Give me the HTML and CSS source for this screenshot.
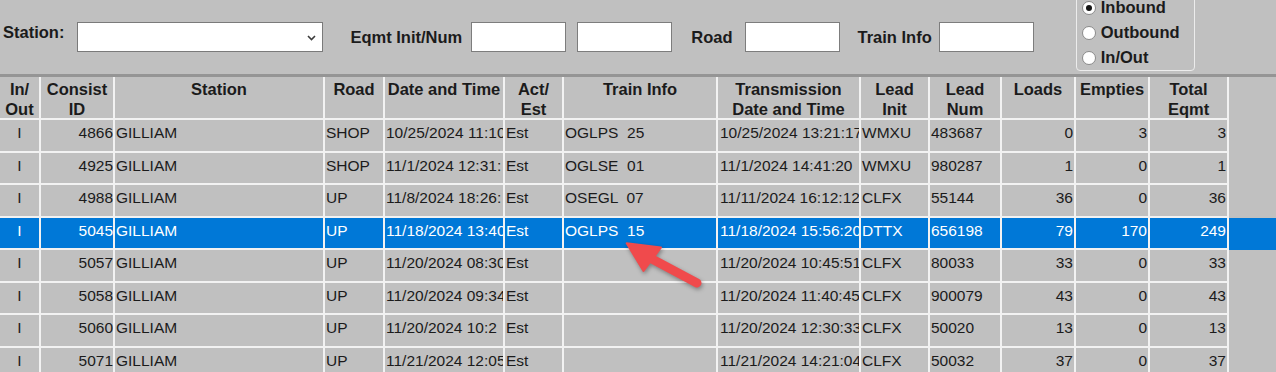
FILE: index.html
```html
<!DOCTYPE html>
<html lang="en">
<head>
  <meta charset="UTF-8">
  <title>Consist Inquiry</title>
  <link rel="stylesheet" href="styles.css">
</head>
<body>

  <!-- Arama alanlari -->
  <div class="toolbar">
    <span class="lbl lbl-top">Station:</span>
    <div class="select">
      <svg class="chev" width="9" height="6" viewBox="0 0 9 6"><polyline points="1,1 4.5,4.5 8,1" fill="none" stroke="#3c3c3c" stroke-width="1.6"/></svg>
    </div>
    <span class="lbl eqmt">Eqmt Init/Num</span>
    <div class="box init"></div>
    <div class="box num"></div>
    <span class="lbl road">Road</span>
    <div class="box roadbox"></div>
    <span class="lbl train">Train Info</span>
    <div class="box trainbox"></div>

    <div class="direction">
      <div class="radio"><span class="dot checked"></span>Inbound</div>
      <div class="radio"><span class="dot"></span>Outbound</div>
      <div class="radio"><span class="dot"></span>In/Out</div>
    </div>
  </div>

  <!-- Tablo -->
  <div class="grid" id="grid">
    <div class="row head">
      <div class="c">In/<br>Out</div>
      <div class="c">Consist<br>ID</div>
      <div class="c">Station</div>
      <div class="c">Road</div>
      <div class="c">Date and Time</div>
      <div class="c">Act/<br>Est</div>
      <div class="c">Train Info</div>
      <div class="c">Transmission<br>Date and Time</div>
      <div class="c">Lead<br>Init</div>
      <div class="c">Lead<br>Num</div>
      <div class="c">Loads</div>
      <div class="c">Empties</div>
      <div class="c">Total<br>Eqmt</div>
      <div class="fill"></div>
    </div>
  </div>

  <svg class="arrow" width="110" height="60" viewBox="0 0 110 60">
    <line x1="52" y1="24" x2="97" y2="48" stroke="#f04a4c" stroke-width="9" stroke-linecap="round"/>
    <polygon points="26.7,8.3 61,12.5 43.5,36" fill="#f04a4c" stroke="#f04a4c" stroke-width="2" stroke-linejoin="round"/>
  </svg>

  <script>
    var rows = [
      ["I", "4866", "GILLIAM", "SHOP", "10/25/2024 11:10", "Est", "OGLPS  25", "10/25/2024 13:21:17", "WMXU", "483687", "0", "3", "3"],
      ["I", "4925", "GILLIAM", "SHOP", "11/1/2024 12:31:", "Est", "OGLSE  01", "11/1/2024 14:41:20", "WMXU", "980287", "1", "0", "1"],
      ["I", "4988", "GILLIAM", "UP", "11/8/2024 18:26:", "Est", "OSEGL  07", "11/11/2024 16:12:12", "CLFX", "55144", "36", "0", "36"],
      ["I", "5045", "GILLIAM", "UP", "11/18/2024 13:40", "Est", "OGLPS  15", "11/18/2024 15:56:20", "DTTX", "656198", "79", "170", "249"],
      ["I", "5057", "GILLIAM", "UP", "11/20/2024 08:30", "Est", "", "11/20/2024 10:45:51", "CLFX", "80033", "33", "0", "33"],
      ["I", "5058", "GILLIAM", "UP", "11/20/2024 09:34", "Est", "", "11/20/2024 11:40:45", "CLFX", "900079", "43", "0", "43"],
      ["I", "5060", "GILLIAM", "UP", "11/20/2024 10:2", "Est", "", "11/20/2024 12:30:33", "CLFX", "50020", "13", "0", "13"],
      ["I", "5071", "GILLIAM", "UP", "11/21/2024 12:05", "Est", "", "11/21/2024 14:21:04", "CLFX", "50032", "37", "0", "37"]
    ];
    var cls = ["mid", "num", "", "", "", "", "pre", "tx", "", "", "num", "num", "num"];
    var grid = document.getElementById('grid');

    rows.forEach(function (r) {
      var row = document.createElement('div');
      row.className = 'row';
      if (r[1] === "5045") row.classList.add('selected');
      r.forEach(function (v, i) {
        var c = document.createElement('div');
        c.className = 'c ' + cls[i];
        c.textContent = v;
        row.appendChild(c);
      });
      var f = document.createElement('div');
      f.className = 'fill';
      row.appendChild(f);
      grid.appendChild(row);
    });
  </script>

</body>
</html>
```

FILE: styles.css
```css
html, body {
  margin: 0;
  padding: 0;
  height: 100%;
  overflow: hidden;
  background: #c0c0c0;
  color: #1b1b1b;
  font-family: "Liberation Sans", Arial, sans-serif;
  font-size: 15.5px;
}

/* Arama alanlari */
.toolbar {
  display: flex;
  align-items: flex-start;
  height: 74px;
  box-sizing: border-box;
  padding: 22px 0 0 3px;
}

.lbl {
  font-weight: bold;
  font-size: 16.5px;
  line-height: 30px;
  white-space: nowrap;
}

.lbl-top { line-height: 20px; }

.select {
  position: relative;
  width: 246px;
  height: 30px;
  margin-left: 13px;
  box-sizing: border-box;
  border: 1px solid #7a7a7a;
  background: #fff;
}

.chev {
  position: absolute;
  right: 6px;
  top: 12px;
}

.box {
  width: 95px;
  height: 30px;
  box-sizing: border-box;
  border: 1px solid #7d7d7d;
  background: #fff;
}

.eqmt { margin-left: 27px; }
.init { margin-left: 9px; }
.num { margin-left: 11px; }
.road { margin-left: 19px; }
.roadbox { margin-left: 12px; }
.train { margin-left: 18px; }
.trainbox { margin-left: 7px; }

.direction {
  margin: -28px 0 0 42px;
  width: 119px;
  box-sizing: border-box;
  padding: 0 0 0 5px;
  border: 1px solid #ececec;
  border-radius: 4px;
}

.radio {
  display: flex;
  align-items: center;
  height: 25px;
  font-weight: bold;
  font-size: 16.5px;
}

.dot {
  width: 14px;
  height: 14px;
  box-sizing: border-box;
  margin-right: 5px;
  border: 1px solid #8a8a8a;
  border-radius: 50%;
  background: #fff;
  display: flex;
  align-items: center;
  justify-content: center;
}

.dot.checked::after {
  content: "";
  width: 6px;
  height: 6px;
  border-radius: 50%;
  background: #151515;
}

/* Tablo */
.grid {
  border-top: 3px solid #959595;
}

.row {
  display: grid;
  grid-template-columns: 41px 74px 210px 60px 120px 59px 154px 143px 69px 72px 74px 74px 79px 1fr;
  height: 33px;
  background: linear-gradient(#f2f2f2, #f2f2f2) no-repeat left bottom / 1229px 2px;
}

.row:nth-child(odd) { height: 32px; }

.row .c {
  box-sizing: border-box;
  border-right: 2px solid #f2f2f2;
  padding: 3px 0 2px 1px;
  line-height: 20px;
  white-space: nowrap;
  overflow: hidden;
}

.row.head {
  height: 43px;
  font-weight: bold;
  font-size: 16.5px;
}

.head .c {
  text-align: center;
  padding: 2px 0 0 0;
}

.row .mid { text-align: center; padding-left: 0; }
.row .num { text-align: right; padding-left: 0; padding-right: 1px; }
.row .pre { white-space: pre; }
.row .tx { padding-left: 2px; }

.row .c:nth-child(2) { padding-right: 0; }

.row.selected {
  background-color: #0078d7;
  color: #fff;
}

.arrow {
  position: absolute;
  left: 600px;
  top: 235px;
  filter: drop-shadow(1px 2px 2px rgba(0, 0, 0, 0.35));
}
```
